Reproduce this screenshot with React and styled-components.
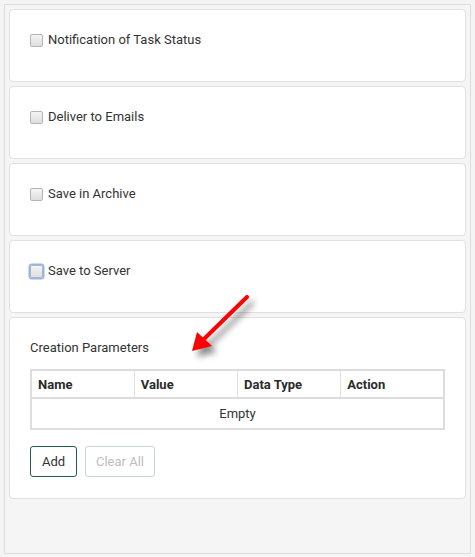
import React, { useState } from 'react'
import styled, { createGlobalStyle } from 'styled-components'

const Global = createGlobalStyle`
  html, body {
    margin: 0;
    padding: 0;
    background: #f4f4f4;
    font-family: Roboto, "Liberation Sans", Arial, sans-serif;
    font-size: 13px;
    color: #333;
  }
`

const Page = styled.div`
  position: relative;
  width: 475px;
  height: 557px;
  padding: 4px;
  box-sizing: border-box;
`

const Panel = styled.div`
  height: 550px;
  box-sizing: border-box;
  border: 1px solid #dcdcdc;
  background: #f5f5f5;
  padding: 4px 4px;
  display: flex;
  flex-direction: column;
  gap: 4px;
`

const Card = styled.div`
  background: #fff;
  border: 1px solid #e0e0e0;
  border-radius: 4px;
  box-sizing: border-box;
  height: ${p => p.tall ? '182px' : '73px'};
  padding: 20px 20px 20px;
`

const Label = styled.label`
  display: flex;
  align-items: center;
  gap: 5px;
  line-height: 20px;
  cursor: pointer;
`

const Box = styled.span`
  width: 11px;
  height: 11px;
  border: 1px solid #b5b5b5;
  border-radius: 2px;
  background: linear-gradient(#f4f4f4, #dedede);
  box-shadow: ${p => p.focus ? '0 0 0 1.5px #8fb4f2' : 'none'};
`

const Title = styled.div`
  line-height: 20px;
`

const Table = styled.table`
  width: 100%;
  margin-top: 11px;
  border-collapse: collapse;
  border: 2px solid #dddddd;
  table-layout: fixed;
`

const Th = styled.th`
  text-align: left;
  font-weight: bold;
  height: 26px;
  padding: 0 6px;
  border-left: 1px solid #e2e2e2;
  border-bottom: 2px solid #dddddd;
  color: #2b2b2b;
`

const Td = styled.td`
  text-align: center;
  height: 29px;
  padding: 0;
`

const Actions = styled.div`
  display: flex;
  gap: 8px;
  margin-top: 16px;
`

const Button = styled.button`
  height: 31px;
  width: ${p => p.disabled ? '70px' : '47px'};
  padding: 0;
  font-family: inherit;
  font-size: 13px;
  background: #fff;
  border-radius: 3px;
  border: 1px solid ${p => p.disabled ? '#c5d8d4' : '#1f5e54'};
  color: ${p => p.disabled ? '#bdbdbd' : '#333'};
`

const Arrow = styled.svg`
  position: absolute;
  left: 180px;
  top: 285px;
  overflow: visible;
  filter: drop-shadow(5px 6px 3px rgba(0, 0, 0, 0.45));
`

const options = [
  'Notification of Task Status',
  'Deliver to Emails',
  'Save in Archive',
  'Save to Server',
]

export default function App() {
  const [checked] = useState({})
  return (
    <Page>
      <Global />
      <Panel>
        {options.map((o, i) => (
          <Card key={o}>
            <Label>
              <Box focus={i === 3} data-checked={!!checked[o]} />
              {o}
            </Label>
          </Card>
        ))}
        <Card tall>
          <Title>Creation Parameters</Title>
          <Table>
            <thead>
              <tr>
                <Th style={{ borderLeft: 'none' }}>Name</Th>
                <Th>Value</Th>
                <Th>Data Type</Th>
                <Th>Action</Th>
              </tr>
            </thead>
            <tbody>
              <tr>
                <Td colSpan={4}>Empty</Td>
              </tr>
            </tbody>
          </Table>
          <Actions>
            <Button>Add</Button>
            <Button disabled>Clear All</Button>
          </Actions>
        </Card>
      </Panel>
      <Arrow width="80" height="80" viewBox="0 0 80 80">
        <line x1="67" y1="12" x2="24" y2="54" stroke="#f00" strokeWidth="4" strokeLinecap="round" />
        <polygon points="12,66 17,47 32,61" fill="#f00" />
      </Arrow>
    </Page>
  )
}
